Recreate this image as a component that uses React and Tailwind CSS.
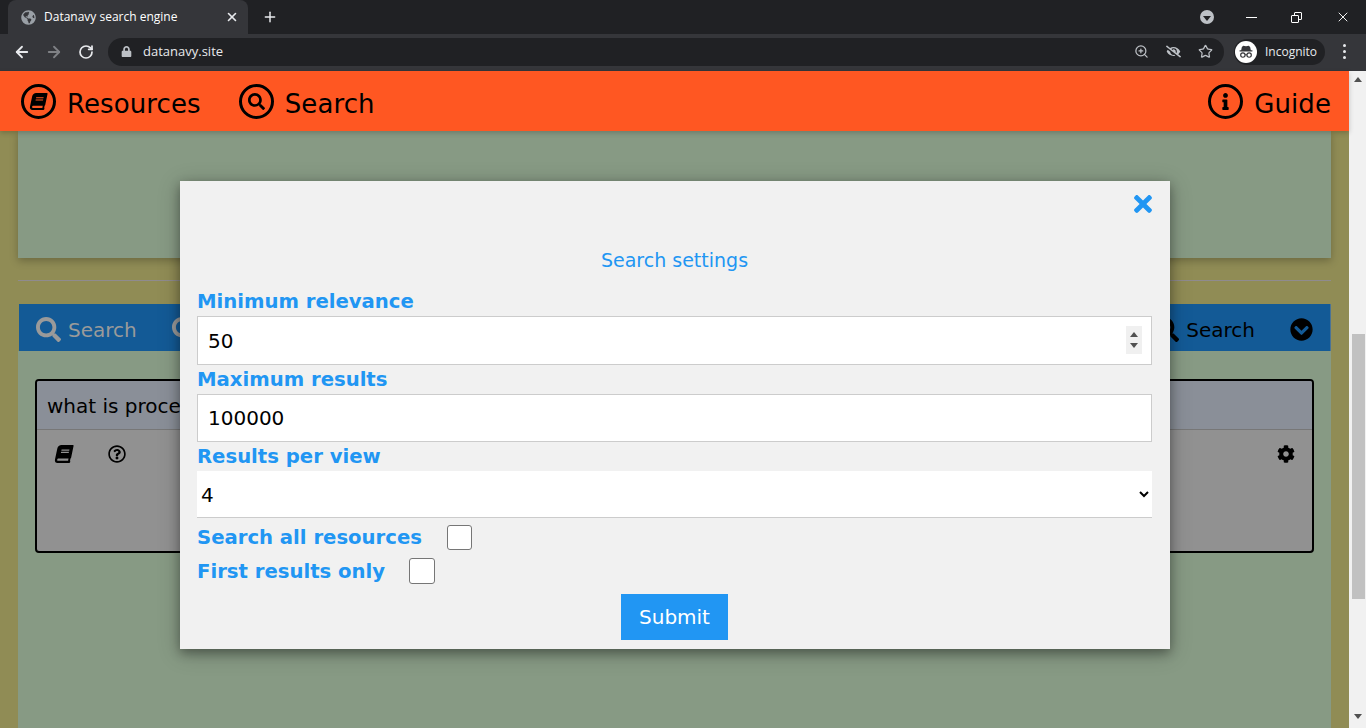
import React from 'react';
import { ArrowLeft, ArrowRight, RotateCw, ZoomIn, Star, X, Plus } from 'lucide-react';
import { FaBook, FaSearch, FaInfo, FaLock, FaEyeSlash, FaRegQuestionCircle, FaCog, FaChevronCircleDown, FaTimes, FaGlobeAmericas } from 'react-icons/fa';

const NavItem = ({ icon, label, className = '' }) => (
  <div className={`flex items-center gap-[11px] ${className}`}>
    <span className="mt-[1px] flex h-[35px] w-[35px] items-center justify-center rounded-full border-[3px] border-black text-[17px]">
      {icon}
    </span>
    <span className="pt-[6px] text-[26px] leading-none tracking-[0.1px]">{label}</span>
  </div>
);

const IncognitoIcon = () => (
  <svg viewBox="0 0 24 24" className="h-[22px] w-[22px]">
    <circle cx="12" cy="12" r="12" fill="#fff" />
    <path d="M7.5 6.5 9 5.2l3 .6 3-.6 1.5 1.3.8 3.7H19v1.2H5v-1.2h1.7z" fill="#35363a" />
    <circle cx="8.6" cy="15.3" r="2.4" fill="none" stroke="#35363a" strokeWidth="1.3" />
    <circle cx="15.4" cy="15.3" r="2.4" fill="none" stroke="#35363a" strokeWidth="1.3" />
    <path d="M11 15h2" stroke="#35363a" strokeWidth="1.2" />
  </svg>
);

const ChromeBar = () => (
  <div className="h-[71px] shrink-0 font-['Open_Sans','Noto_Sans',sans-serif] text-white">
    <div className="flex h-[34px] items-end bg-[#202124]">
      <div className="ml-[8px] flex h-[34px] w-[240px] items-center rounded-t-[8px] bg-[#35363a] pl-[13px] pr-[9px]">
        <FaGlobeAmericas className="text-[15px] text-[#9aa0a6]" />
        <span className="ml-[8px] flex-1 text-[12px]">Datanavy search engine</span>
        <X size={14} strokeWidth={2.8} className="text-[#e8eaed]" />
      </div>
      <div className="ml-[14px] flex h-[34px] items-center">
        <Plus size={16} strokeWidth={2.2} className="text-[#e8eaed]" />
      </div>
      <div className="flex h-[34px] flex-1 items-center justify-end">
        <span className="mr-[32px] flex h-[14px] w-[14px] items-center justify-center rounded-full bg-[#bdc1c6]">
          <span className="mt-[3px] border-x-[4px] border-t-[5px] border-x-transparent border-t-[#202124]" />
        </span>
        <span className="mr-[34px] h-px w-[11px] bg-white" />
        <span className="relative mr-[33px] h-[11px] w-[11px]">
          <span className="absolute right-0 top-0 h-[8px] w-[8px] rounded-[1px] border border-white" />
          <span className="absolute bottom-0 left-0 h-[8px] w-[8px] rounded-[1px] border border-white bg-[#202124]" />
        </span>
        <X size={16} strokeWidth={1.4} className="mr-[15px]" />
      </div>
    </div>
    <div className="flex h-[37px] items-center bg-[#35363a] pb-[2px]">
      <ArrowLeft size={18} strokeWidth={2.4} className="ml-[13px] text-[#e8eaed]" />
      <ArrowRight size={18} strokeWidth={2.4} className="ml-[14px] text-[#7f8185]" />
      <RotateCw size={16} strokeWidth={2.6} className="ml-[15px] text-[#e8eaed]" />
      <div className="ml-[14px] flex h-[28px] w-[1116px] items-center rounded-full bg-[#202124] pl-[13px] pr-[11px]">
        <FaLock className="text-[11px] text-[#bdc1c6]" />
        <span className="ml-[11px] flex-1 text-[13px] text-[#e8eaed]">datanavy.site</span>
        <ZoomIn size={15} className="text-[#bdc1c6]" />
        <FaEyeSlash className="ml-[17px] text-[15px] text-[#bdc1c6]" />
        <Star size={15} className="ml-[17px] text-[#bdc1c6]" />
      </div>
      <div className="ml-[10px] flex h-[26px] w-[91px] items-center rounded-full bg-[#202124] pl-[1px]">
        <IncognitoIcon />
        <span className="ml-[8px] text-[12px] text-[#e8eaed]">Incognito</span>
      </div>
      <div className="ml-[18px] flex flex-col gap-[3px]">
        <span className="h-[3px] w-[3px] rounded-full bg-[#e8eaed]" />
        <span className="h-[3px] w-[3px] rounded-full bg-[#e8eaed]" />
        <span className="h-[3px] w-[3px] rounded-full bg-[#e8eaed]" />
      </div>
    </div>
  </div>
);

const Label = ({ children }) => (
  <label className="block text-[19.65px] font-bold leading-[23px] text-[#2196f3]">{children}</label>
);

const SettingsModal = () => (
  <div className="absolute left-[180px] top-[50px] h-[468px] w-[990px] bg-[#f1f1f1] pl-[17px] pr-[18px] shadow-[0_4px_10px_0_rgba(0,0,0,0.3),0_4px_20px_0_rgba(0,0,0,0.25)]">
    <div className="flex h-[46px] items-center justify-end">
      <FaTimes className="mr-[-4px] text-[26px] text-[#2196f3]" />
    </div>
    <h2 className="mt-[18px] text-center text-[19px] leading-[30px] text-[#2196f3]">Search settings</h2>
    <div className="mt-[15px]">
      <Label>Minimum relevance</Label>
      <div className="relative mt-[3px]">
        <input
          type="text"
          defaultValue="50"
          className="block h-[49px] w-full border border-[#ccc] bg-white px-[10px] text-[20px] text-black"
        />
        <div className="absolute right-[10px] top-[10px] flex h-[28px] w-[16px] flex-col items-center justify-center gap-[6px] bg-[#f0f0f0]">
          <span className="border-x-[4px] border-b-[5px] border-x-transparent border-b-[#505050]" />
          <span className="border-x-[4px] border-t-[5px] border-x-transparent border-t-[#505050]" />
        </div>
      </div>
    </div>
    <div className="mt-[3px]">
      <Label>Maximum results</Label>
      <input
        type="text"
        defaultValue="100000"
        className="mt-[3px] block h-[48px] w-full border border-[#ccc] bg-white px-[10px] text-[20px] text-black"
      />
    </div>
    <div className="mt-[3px]">
      <Label>Results per view</Label>
      <select className="mt-[3px] block h-[47px] w-full border-b border-[#ccc] bg-white pt-[2px] text-[20px] text-black">
        <option>4</option>
      </select>
    </div>
    <div className="mt-[7px] flex h-[25px] items-center">
      <Label>Search all resources</Label>
      <input type="checkbox" className="ml-[25px] h-[25px] w-[25px] appearance-none rounded-[3px] border border-[#767676] bg-white" />
    </div>
    <div className="mt-[8px] flex h-[26px] items-center">
      <Label>First results only</Label>
      <input type="checkbox" className="ml-[24px] h-[26px] w-[26px] appearance-none rounded-[3px] border border-[#767676] bg-white" />
    </div>
    <button className="mx-auto mt-[10px] block h-[46px] w-[107px] bg-[#2196f3] text-[20px] text-white">Submit</button>
  </div>
);

const SearchPanel = () => (
  <div className="flex-1">
    <div className="ml-[1px] flex h-[47px] items-center justify-between border-r border-[#4a7396] bg-[#135a96] px-[17px] pt-[4px]">
      <div className="flex items-center text-[#9a9a9a]">
        <FaSearch className="text-[25px]" />
        <span className="ml-[7px] pt-[1px] text-[20px]">Search</span>
        <FaSearch className="ml-[35px] text-[25px]" />
      </div>
      <div className="flex items-center text-black">
        <FaSearch className="text-[25px]" />
        <span className="ml-[7px] pt-[1px] text-[20px]">Search</span>
        <FaChevronCircleDown className="ml-[35px] text-[23px]" />
      </div>
    </div>
    <div className="h-full bg-[#879a84] px-[17px] pt-[28px]">
      <div className="h-[174px] overflow-hidden rounded-[4px] border-[2px] border-black bg-[#919191]">
        <div className="flex h-[49px] items-center border-b border-[#777] bg-[#8a8f98] pl-[10px] pt-[1px] text-[20px] text-black">
          what is processing
        </div>
        <div className="flex items-start justify-between px-[18px] pt-[15px] text-black">
          <div className="flex items-center gap-[35px]">
            <FaBook className="-skew-x-12 text-[18px]" />
            <FaRegQuestionCircle className="text-[18px]" />
          </div>
          <FaCog className="mr-[-1px] text-[18px]" />
        </div>
      </div>
    </div>
  </div>
);

const Scrollbar = () => (
  <div className="flex w-[17px] shrink-0 flex-col items-center bg-[#f1f1f1]">
    <span className="mt-[6px] border-x-[4px] border-b-[5px] border-x-transparent border-b-[#505050]" />
    <span className="ml-[1px] mt-[252px] h-[265px] w-[13px] bg-[#c1c1c1]" />
    <span className="mt-[115px] border-x-[4px] border-t-[5px] border-x-transparent border-t-[#505050]" />
  </div>
);

export default function App() {
  return (
    <div className="flex h-[728px] w-[1366px] flex-col overflow-hidden font-['DejaVu_Sans',Verdana,sans-serif]">
      <ChromeBar />
      <div className="flex min-h-0 flex-1">
        <div className="flex min-w-0 flex-1 flex-col">
          <nav className="relative z-10 flex h-[60px] shrink-0 items-center bg-[#ff5722] pl-[21px] pr-[18px] text-black shadow-[0_2px_5px_rgba(0,0,0,0.2)]">
            <NavItem icon={<FaBook className="-skew-x-12" />} label="Resources" />
            <NavItem icon={<FaSearch />} label="Search" className="ml-[38px]" />
            <NavItem icon={<FaInfo />} label="Guide" className="ml-auto" />
          </nav>
          <main className="relative flex min-h-0 flex-1 flex-col bg-[#908c55] px-[18px]">
            <div className="h-[127px] shrink-0 bg-[#879a84] shadow-[0_3px_8px_rgba(0,0,0,0.25)]" />
            <hr className="mt-[22px] shrink-0 border-t border-[#8f8b8f]" />
            <div className="mt-[23px] flex min-h-0 flex-1">
              <SearchPanel />
            </div>
            <SettingsModal />
          </main>
        </div>
        <Scrollbar />
      </div>
    </div>
  );
}
